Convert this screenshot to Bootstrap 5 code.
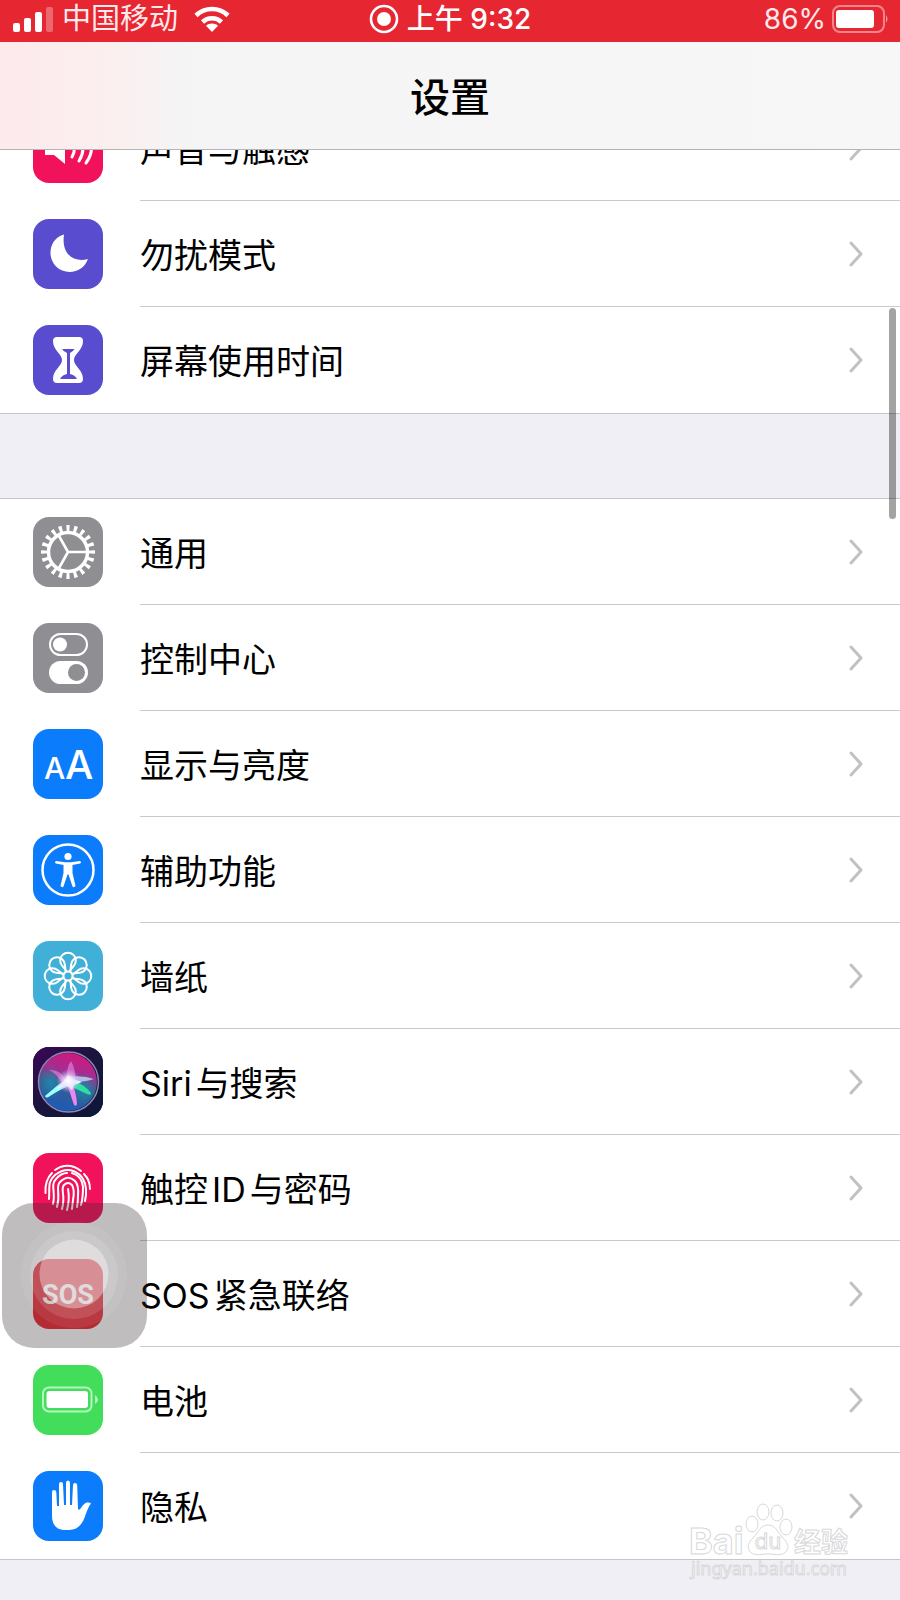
<!DOCTYPE html>
<html lang="zh-CN">
<head>
<meta charset="utf-8">
<meta name="viewport" content="width=device-width, initial-scale=1">
<title>设置</title>
<link href="https://cdn.jsdelivr.net/npm/bootstrap@5.3.0/dist/css/bootstrap.min.css" rel="stylesheet">
<script src="https://cdn.jsdelivr.net/npm/bootstrap@5.3.0/dist/js/bootstrap.bundle.min.js"></script>
<style>
body { background: #f0eff5; color: #000; font-family: Inter, "Noto Sans CJK SC", sans-serif; }
.screen { min-height: 100vh; overflow: hidden; }
.top-area { z-index: 2; }
.status { height: 42px; padding: 0 12px 4px 12px; background: #e62631; color: #ffe9ea; font-size: 28px; line-height: 38px; }
.status > div { flex: 1 1 0; }
.carrier { font-size: 29px; }
.clock { font-weight: 500; color: #fff; }
.title-bar { height: 108px; padding-top: 4px; border-bottom: 1px solid #b4b4b6; background: linear-gradient(90deg, #fdeaec 0, #fbeeee 100px, #f5f5f6 190px, #f7f7f7 100%); }
.title-bar h1 { font-size: 40px; font-weight: 500; line-height: 56px; }
.settings { border-bottom: 1px solid #c6c6ca; background: #fff; }
.under-header { margin-top: -55px; }
.after-gap { margin-top: 84px; border-top: 1px solid #c6c6ca; }
.item { height: 106px; padding-left: 33px; gap: 37px; color: #000; font-size: 34px; line-height: 48px; }
.item-body { border-bottom: 1px solid #c9c9cc; padding-right: 36px; }
.item-label { padding-top: 4px; }
li:last-child .item-body { border-bottom: 0; }
.tile { width: 70px; height: 70px; border-radius: 16px; fill: #fff; }
.purple { background: #594ccf; } .grey { background: #8f8e93; } .blue { background: #0b7cfc; }
.teal { background: #40b0d8; } .pink { background: #f2125b; } .red { background: #ee2c38; }
.green { background: #42de5b; } .night { background: #171438; }
.line { fill: none; stroke: #fff; stroke-linecap: round; stroke-linejoin: round; }
.chevron { width: 16px; height: 26px; fill: none; stroke: #c1c1c4; stroke-width: 3; stroke-linecap: round; stroke-linejoin: round; }
.scroll-thumb { top: 308px; right: 4px; width: 7px; height: 211px; border-radius: 4px; background: rgba(0,0,0,.36); z-index: 3; }
.assist { top: 1203px; left: 2px; width: 145px; height: 145px; border: 0; padding: 0; border-radius: 32px; background: rgba(52,42,46,.31); z-index: 3; }
.watermark { right: 44px; top: 1500px; width: 168px; height: 84px; z-index: 3; }
</style>
</head>
<body>
<div class="screen position-relative">
  <header class="top-area position-relative">
    <div class="status d-flex align-items-center">
      <div class="d-flex align-items-center">
        <svg width="42" height="28" viewBox="0 0 42 28" fill="#fff" aria-hidden="true"><rect x="1" y="18" width="7" height="9" rx="2"/><rect x="12" y="13" width="7" height="14" rx="2"/><rect x="23" y="7" width="7" height="20" rx="2"/><rect x="34" y="2" width="7" height="25" rx="2" opacity=".3"/></svg>
        <span class="carrier ms-2">中国移动</span>
        <svg class="ms-3" width="36" height="28" viewBox="0 0 36 28" fill="none" stroke="#fff" stroke-width="4.6" aria-hidden="true"><path d="M2 10.5a23 23 0 0 1 32 0M8.500 17a14 14 0 0 1 19 0"/><path d="M18 18.500c-2.500 0-4.500.8-6 2.300l6 6.200 6-6.200c-1.500-1.500-3.500-2.300-6-2.300z" fill="#fff" stroke="none"/></svg>
      </div>
      <div class="clock d-flex align-items-center justify-content-center gap-2">
        <svg width="30" height="30" viewBox="0 0 30 30" aria-hidden="true"><circle cx="15" cy="15" r="13" fill="none" stroke="#fff" stroke-width="2.600"/><circle cx="15" cy="15" r="7" fill="#fff"/></svg>
        <span>上午 9:32</span>
      </div>
      <div class="d-flex align-items-center justify-content-end gap-1">
        <span>86%</span>
        <svg width="58" height="28" viewBox="0 0 58 28" aria-hidden="true"><rect x="3" y="1" width="51" height="26" rx="7" fill="none" stroke="#fff" stroke-opacity=".45" stroke-width="2"/><rect x="6" y="5" width="38" height="18" rx="3" fill="#fff"/><path d="M56 10q3 4 0 8z" fill="#fff" opacity=".5"/></svg>
      </div>
    </div>
    <div class="title-bar d-flex align-items-center justify-content-center"><h1 class="m-0">设置</h1></div>
  </header>

  <main>
    <ul class="settings under-header list-unstyled mb-0">
      <li><a href="#sound" class="item d-flex align-items-center text-decoration-none">
        <svg class="tile pink flex-shrink-0" viewBox="0 0 70 70" aria-hidden="true"><path d="M12 28h9l11-9v32l-11-9h-9z"/><path class="line" stroke-width="3" d="M39 27q5 8 0 17M46 23q8 12 0 25M53 19q11 16 0 31"/></svg>
        <span class="item-body d-flex flex-grow-1 align-items-center justify-content-between h-100"><span class="item-label">声音与触感</span><svg class="chevron" viewBox="0 0 16 26"><path d="M3 2l10 11-10 11"/></svg></span></a></li>
      <li><a href="#dnd" class="item d-flex align-items-center text-decoration-none">
        <svg class="tile purple flex-shrink-0" viewBox="0 0 70 70" aria-hidden="true"><path d="M31 15.500C21 18.500 17.500 26.500 17.500 34A19 19 0 0 0 36.500 53C45 53 52 48 55 40C42 44 28 36 31 15.500z"/></svg>
        <span class="item-body d-flex flex-grow-1 align-items-center justify-content-between h-100"><span class="item-label">勿扰模式</span><svg class="chevron" viewBox="0 0 16 26"><path d="M3 2l10 11-10 11"/></svg></span></a></li>
      <li><a href="#screen-time" class="item d-flex align-items-center text-decoration-none">
        <svg class="tile purple flex-shrink-0" viewBox="0 0 70 70" aria-hidden="true"><path d="M24 12h22q4 0 4 4c0 9-9 13-9 19s9 10 9 19q0 4-4 4h-22q-4 0-4-4c0-9 9-13 9-19s-9-10-9-19q0-4 4-4z"/><path d="M29 24h12.500q-1 2-4.500 4v21q5 1 7 5h-17q2-4 7-5v-21q-4-2-5-4z" fill="#594ccf"/></svg>
        <span class="item-body d-flex flex-grow-1 align-items-center justify-content-between h-100"><span class="item-label">屏幕使用时间</span><svg class="chevron" viewBox="0 0 16 26"><path d="M3 2l10 11-10 11"/></svg></span></a></li>
    </ul>

    <ul class="settings after-gap list-unstyled mb-0">
      <li><a href="#general" class="item d-flex align-items-center text-decoration-none">
        <svg class="tile grey flex-shrink-0" viewBox="0 0 70 70" aria-hidden="true"><circle cx="35" cy="35" r="23.500" fill="none" stroke="#fff" stroke-width="7" pathLength="200" stroke-dasharray="4.200 5.800" stroke-dashoffset="2.100"/><circle cx="35" cy="35" r="19.500" fill="none" stroke="#fff" stroke-width="3.500"/><path class="line" stroke-width="2.600" d="M35 35h18M35 35L26 19M35 35L26 51"/></svg>
        <span class="item-body d-flex flex-grow-1 align-items-center justify-content-between h-100"><span class="item-label">通用</span><svg class="chevron" viewBox="0 0 16 26"><path d="M3 2l10 11-10 11"/></svg></span></a></li>
      <li><a href="#control" class="item d-flex align-items-center text-decoration-none">
        <svg class="tile grey flex-shrink-0" viewBox="0 0 70 70" aria-hidden="true"><rect class="line" x="17" y="11" width="37" height="21" rx="10.500" stroke-width="2"/><circle cx="27" cy="21.500" r="7"/><rect x="16" y="38" width="39" height="23" rx="11.500"/><circle cx="43.500" cy="49.500" r="8.500" fill="#8f8e93"/></svg>
        <span class="item-body d-flex flex-grow-1 align-items-center justify-content-between h-100"><span class="item-label">控制中心</span><svg class="chevron" viewBox="0 0 16 26"><path d="M3 2l10 11-10 11"/></svg></span></a></li>
      <li><a href="#display" class="item d-flex align-items-center text-decoration-none">
        <svg class="tile blue flex-shrink-0" viewBox="0 0 70 70" aria-hidden="true" font-family="Inter, sans-serif" font-weight="500"><text x="11" y="50" font-size="30">A</text><text x="32" y="50" font-size="40">A</text></svg>
        <span class="item-body d-flex flex-grow-1 align-items-center justify-content-between h-100"><span class="item-label">显示与亮度</span><svg class="chevron" viewBox="0 0 16 26"><path d="M3 2l10 11-10 11"/></svg></span></a></li>
      <li><a href="#accessibility" class="item d-flex align-items-center text-decoration-none">
        <svg class="tile blue flex-shrink-0" viewBox="0 0 70 70" aria-hidden="true"><circle class="line" cx="35" cy="35" r="25.500" stroke-width="2.500"/><circle cx="35" cy="21.500" r="3.600"/><path d="M23 26l9 1.200h6l9-1.200q2 1.300 0 2.600l-7.500 1.400v8l3 13q-1.500 2-3 .5l-4-12h-1l-4 12q-1.500 1.500-3-.5l3-13v-8l-7.500-1.400q-2-1.300 0-2.600z"/></svg>
        <span class="item-body d-flex flex-grow-1 align-items-center justify-content-between h-100"><span class="item-label">辅助功能</span><svg class="chevron" viewBox="0 0 16 26"><path d="M3 2l10 11-10 11"/></svg></span></a></li>
      <li><a href="#wallpaper" class="item d-flex align-items-center text-decoration-none">
        <svg class="tile teal flex-shrink-0" viewBox="0 0 70 70" aria-hidden="true"><defs><path id="petal" d="M35 32L29 24.500A7.800 7.800 0 1 1 41 24.500z"/></defs><g class="line" stroke-width="2"><use href="#petal"/><use href="#petal" transform="rotate(45 35 35)"/><use href="#petal" transform="rotate(90 35 35)"/><use href="#petal" transform="rotate(135 35 35)"/><use href="#petal" transform="rotate(180 35 35)"/><use href="#petal" transform="rotate(225 35 35)"/><use href="#petal" transform="rotate(270 35 35)"/><use href="#petal" transform="rotate(315 35 35)"/><circle cx="35" cy="35" r="4.500" fill="#40b0d8"/></g></svg>
        <span class="item-body d-flex flex-grow-1 align-items-center justify-content-between h-100"><span class="item-label">墙纸</span><svg class="chevron" viewBox="0 0 16 26"><path d="M3 2l10 11-10 11"/></svg></span></a></li>
      <li><a href="#siri" class="item d-flex align-items-center text-decoration-none">
        <svg class="tile night flex-shrink-0" viewBox="0 0 70 70" aria-hidden="true"><defs>
          <linearGradient id="sky" x2="1" y2="1"><stop offset="0" stop-color="#3a0757"/><stop offset=".5" stop-color="#1a153c"/><stop offset="1" stop-color="#0a1838"/></linearGradient>
          <linearGradient id="orb" x1=".65" y1="0" x2=".4" y2="1"><stop offset="0" stop-color="#d3177b"/><stop offset=".32" stop-color="#a52d91"/><stop offset=".58" stop-color="#3a5a91"/><stop offset="1" stop-color="#1a5cb8"/></linearGradient>
          <radialGradient id="aqua"><stop offset="0" stop-color="#1a8fb8" stop-opacity=".8"/><stop offset="1" stop-color="#159d9e" stop-opacity="0"/></radialGradient>
          <radialGradient id="glow"><stop offset="0" stop-color="#fff"/><stop offset=".4" stop-color="#f0e4ff" stop-opacity=".8"/><stop offset="1" stop-color="#c6a0ff" stop-opacity="0"/></radialGradient></defs>
          <rect width="70" height="70" fill="url(#sky)"/><circle cx="35" cy="35" r="29" fill="url(#orb)"/><ellipse cx="18" cy="36" rx="13" ry="16" fill="url(#aqua)"/><ellipse cx="51" cy="42" rx="14" ry="16" fill="url(#aqua)"/>
          <path d="M33 34Q28 22 16 23Q23 26 29 36zM34 34Q33 20 38 14Q43 22 42 34z" fill="#d873cf" opacity=".8"/>
          <path d="M35 30Q50 28 61 32Q53 35 40 35z" fill="#b9c9ea" opacity=".9"/><path d="M38 32Q52 38 58 46Q58 49 54 47Q44 42 34 38z" fill="#2fe0a4"/>
          <path d="M37 29Q23 39 12 49Q13 52 17 49Q29 41 39 38z" fill="#9effff"/><path d="M33 34Q37 46 41 58Q44 60 44 56Q43 44 38 34z" fill="#ea86ee"/><path d="M35 28l5 4 9 3-8 3-2 5-5-5-10 4 7-8z" fill="#fff"/><circle cx="35.500" cy="34" r="12" fill="url(#glow)"/><circle cx="35.500" cy="35" r="30" fill="none" stroke="#8e87b5" stroke-width="1.500"/></svg>
        <span class="item-body d-flex flex-grow-1 align-items-center justify-content-between h-100"><span class="item-label"><span class="me-1">Siri</span>与搜索</span><svg class="chevron" viewBox="0 0 16 26"><path d="M3 2l10 11-10 11"/></svg></span></a></li>
      <li><a href="#touch-id" class="item d-flex align-items-center text-decoration-none">
        <svg class="tile pink flex-shrink-0" viewBox="0 0 70 70" aria-hidden="true"><g class="line" stroke-width="2"><path d="M22 17Q35 8 48 18M19 20C13 26 12 33 12.500 40M51 21Q57 27 57 36"/><path d="M16 46C17 35 14 29 22 22Q35 12 47 22Q54 29 53 42L52 48"/><path d="M20 51C23 39 17 32 23 26Q28 20 34 20M39 20Q49 23 50 34Q50 45 48 52"/><path d="M24 54C28 40 22 34 27 29Q35 21 42 28Q46 32 45 43Q45 50 44 54"/><path d="M29 56C33 42 27 36 31 32Q35 28 39 32Q42 37 40 47L39 56"/><path d="M34 57Q37 46 35 36"/></g></svg>
        <span class="item-body d-flex flex-grow-1 align-items-center justify-content-between h-100"><span class="item-label">触控<span class="mx-1">ID</span>与密码</span><svg class="chevron" viewBox="0 0 16 26"><path d="M3 2l10 11-10 11"/></svg></span></a></li>
      <li><a href="#sos" class="item d-flex align-items-center text-decoration-none">
        <svg class="tile red flex-shrink-0" viewBox="0 0 70 70" aria-hidden="true"><text x="35" y="45" font-family="Roboto, sans-serif" font-weight="700" font-size="27" text-anchor="middle">SOS</text></svg>
        <span class="item-body d-flex flex-grow-1 align-items-center justify-content-between h-100"><span class="item-label"><span class="me-1">SOS</span>紧急联络</span><svg class="chevron" viewBox="0 0 16 26"><path d="M3 2l10 11-10 11"/></svg></span></a></li>
      <li><a href="#battery" class="item d-flex align-items-center text-decoration-none">
        <svg class="tile green flex-shrink-0" viewBox="0 0 70 70" aria-hidden="true"><rect x="10" y="22.500" width="48.500" height="24" rx="6" fill="none" stroke="#b4f5bd" stroke-width="2"/><rect x="13.500" y="26" width="41.500" height="17" rx="3"/><path d="M62 30q6 4.500 0 9z" fill="#b4f5bd"/></svg>
        <span class="item-body d-flex flex-grow-1 align-items-center justify-content-between h-100"><span class="item-label">电池</span><svg class="chevron" viewBox="0 0 16 26"><path d="M3 2l10 11-10 11"/></svg></span></a></li>
      <li><a href="#privacy" class="item d-flex align-items-center text-decoration-none">
        <svg class="tile blue flex-shrink-0" viewBox="0 0 70 70" aria-hidden="true"><path d="M19 21q0-2 2-2t2.300 2l.7 14h2V13q0-2 2-2t2 2l1 21h2V12q0-2.500 2-2.500t2 2.500v22h2l1-20q0-2 2-2t2.200 2l.8 24q1 2 3-1 3-5 6-5.500 3-.5 4 1-2 2-5 10C50 53 45 59 36 59h-4c-9 0-13-6-13-14z"/></svg>
        <span class="item-body d-flex flex-grow-1 align-items-center justify-content-between h-100"><span class="item-label">隐私</span><svg class="chevron" viewBox="0 0 16 26"><path d="M3 2l10 11-10 11"/></svg></span></a></li>
    </ul>
  </main>

  <div class="scroll-thumb position-absolute"></div>
  <button type="button" class="assist position-absolute" aria-label="辅助触控"><svg class="d-block" width="145" height="145" viewBox="0 0 145 145" fill="#fff" aria-hidden="true"><circle cx="72" cy="72" r="53" opacity=".07"/><circle cx="72" cy="72" r="44" opacity=".12"/><circle cx="72" cy="71" r="34.500" opacity=".36"/></svg></button>
  <svg class="watermark position-absolute" viewBox="0 0 168 84" fill="#fff" fill-opacity=".8" stroke="#d8d8da" stroke-width="1" aria-label="Baidu 经验">
    <text x="1" y="54" font-family="Inter, sans-serif" font-size="36" font-weight="700">Bai</text>
    <ellipse cx="64" cy="24" rx="6" ry="8"/><ellipse cx="75" cy="12" rx="6" ry="8"/><ellipse cx="89" cy="13" rx="6" ry="8"/><ellipse cx="98" cy="27" rx="6" ry="8"/>
    <path d="M80 25c8 0 10 8 15 13s6 9 4 12c-4 7-11 4-19 4s-15 3-19-4c-2-4 0-8 4-12 5-5 7-13 15-13z"/>
    <text x="80" y="49" font-family="Inter, sans-serif" font-size="22" text-anchor="middle">du</text>
    <text x="106" y="52" font-family="'Noto Sans CJK SC', sans-serif" font-size="27" font-weight="700">经验</text>
    <text x="3" y="75" font-family="'Noto Sans', sans-serif" font-size="18">jingyan.baidu.com</text>
  </svg>
</div>
</body>
</html>
